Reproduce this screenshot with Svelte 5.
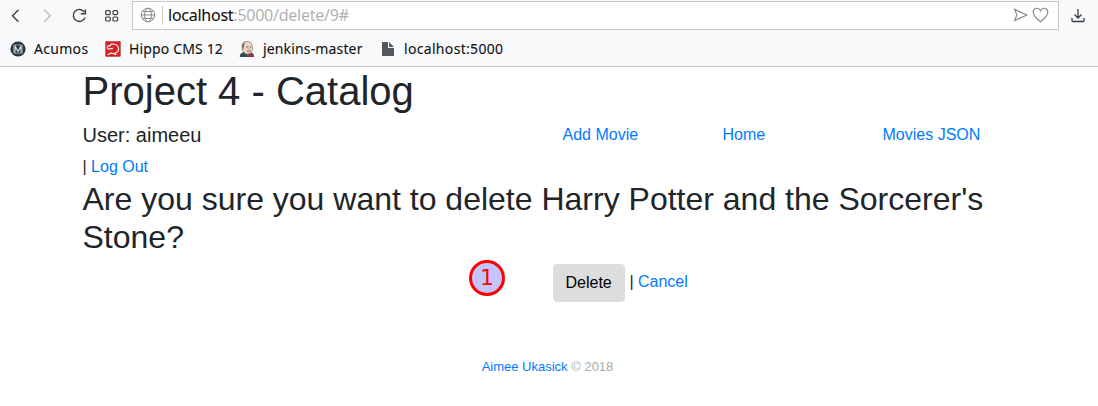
<script>
  const bookmarks = [
    { label: 'Acumos', icon: 'acumos', width: 55 },
    { label: 'Hippo CMS 12', icon: 'hippo', width: 94 },
    { label: 'jenkins-master', icon: 'jenkins', width: 101 },
    { label: 'localhost:5000', icon: 'page', width: 100 }
  ];
  const links = ['Add Movie', 'Home', 'Movies JSON'];
</script>

<div class="window">
  <header class="browser">
    <div class="toolbar">
      <svg class="nav" width="132" height="32" viewBox="0 0 132 32" fill="none" stroke="#3c3f42" stroke-width="1.4">
        <path d="M18.5 9.8 12.5 15.7l6 6" />
        <path d="M44.2 9.8 50.2 15.7l-6 6" stroke="#b8babc" />
        <path d="M84.4 12.2A6 6 0 1 0 85 17.4" />
        <path d="M85.4 9.5v4.2h-4.6" />
        <g stroke-width="1.2">
          <rect x="105.6" y="10.6" width="4.6" height="4" rx="1" />
          <rect x="113" y="10.6" width="4.6" height="4" rx="1" />
          <rect x="105.6" y="17" width="4.6" height="4" rx="1" />
          <rect x="113" y="17" width="4.6" height="4" rx="1" />
        </g>
      </svg>
      <div class="address">
        <svg class="globe" width="16" height="16" viewBox="0 0 16 16" fill="none" stroke="#888b8d" stroke-width="1">
          <circle cx="8" cy="8" r="6.8" />
          <ellipse cx="8" cy="8" rx="3.4" ry="6.8" />
          <path d="M1.2 8h13.6M2.5 4.5h11M2.5 11.5h11" />
        </svg>
        <span class="divider"></span>
        <span class="url"><b>localhost</b><i>:5000/delete/9#</i></span>
        <svg class="actions" width="38" height="18" viewBox="0 0 38 18" fill="none" stroke="#888b8d" stroke-width="1.2">
          <path d="M2.7 3.4 14.8 9 2.7 14.6 4.8 9Z" />
          <path d="M28.5 15.7C26.7 14 21.2 10.5 21.2 6.2C21.2 1.5 26.9 1 28.5 4.7C30.1 1 35.8 1.5 35.8 6.2C35.8 10.5 30.3 14 28.5 15.7Z" />
        </svg>
      </div>
      <svg class="download" width="14" height="16" viewBox="0 0 14 16" fill="none" stroke="#3c3f42" stroke-width="1.3">
        <path d="M7 1v8.8M3.5 6.5 7 10 10.5 6.5M1 10v2.5q0 1 1 1h10q1 0 1-1V10" />
      </svg>
    </div>
    <nav class="bookmarks">
      {#each bookmarks as item}
        <div class="bookmark {item.icon}">
          <svg width="16" height="16" viewBox="0 0 16 16">
            {#if item.icon === 'acumos'}
              <circle cx="8" cy="8" r="7.6" fill="#26343b" />
              <path d="M3.8 4h8.4v8.2H3.8Z" fill="none" stroke="#9aa4a9" />
              <path d="M4.8 4.5 8 10.5l3.2-6M5 6v5.5M11 6v5.5" fill="none" stroke="#e3e6e7" stroke-width="1.1" />
            {:else if item.icon === 'hippo'}
              <rect x=".3" y=".3" width="15.4" height="15.4" rx="1" fill="#cf2529" />
              <path d="M1.8 6.8 3.4 4.6 5.2 4.8 6.2 3.2Q10.6 2.4 12.6 5Q14.6 8.2 12.6 10.6Q11 12.2 8.6 12.6M2 7.6 5.4 7.8 8 7.4M2.6 13.8 6 12.2 8.8 12.6 11.4 13.8" fill="none" stroke="#ffe9e7" stroke-width="1.2" />
            {:else if item.icon === 'jenkins'}
              <path d="M.8 16Q.5 12.5 4.4 11l7.5.5q3.2.8 3.1 4.5Z" fill="#34485a" />
              <path d="M3.2 6Q2.5 1.2 7 .5Q12.3-.2 13.4 4.6Q14.5 9.2 11.6 12.2Q8 14.6 5.2 11.7Q2.5 9.4 3.2 6Z" fill="#e9d1bd" stroke="#8a7a70" stroke-width=".7" />
              <path d="M3 7.5Q2.4 2 5.5 1L5 5.3 4.3 8.2Z" fill="#79716b" />
              <path d="M7.4 6h1.7m1.4 0H12M8 10q2 .9 3.5-.4" stroke="#6b5448" stroke-width=".9" fill="none" />
              <path d="m9 7.1.8 1.3" stroke="#c69a80" />
              <path d="m8 13 2.2 1.1L13.5 13v3l-3.3-1.2L8 16Z" fill="#cf2931" />
            {:else}
              <path d="M2 1h6v6h6v8H2Z" fill="#55585a" />
              <path d="m9 1 5 5H9Z" fill="#55585a" />
            {/if}
          </svg>
          <span class="label" style:width="{item.width}px">{item.label}</span>
        </div>
      {/each}
    </nav>
  </header>

  <main>
    <h1>Project 4 - Catalog</h1>
    <div class="userrow">
      <h5>User: aimeeu</h5>
      {#each links as link}<a href="#top">{link}</a>{/each}
    </div>
    <div class="logout">| <a href="#top">Log Out</a></div>
    <h2>Are you sure you want to delete Harry Potter and the Sorcerer's Stone?</h2>
    <div class="confirm">
      <span class="marker">1</span>
      <div class="choices"><button>Delete</button><span class="cancel">| <a href="#top">Cancel</a></span></div>
    </div>
    <footer><a href="#top">Aimee Ukasick</a> © 2018</footer>
  </main>
</div>

<style>
  :global(body) { margin: 0; background: #fff; }
  .window { width: 1098px; height: 406px; overflow: hidden; box-sizing: border-box; }
  .window :global(*) { box-sizing: border-box; }
  svg { display: block; flex: none; }
  .browser { height: 67px; background: #f7f9fb; border-bottom: 1px solid #c5c8ca; font-family: "Noto Sans", sans-serif; }
  .toolbar { height: 32px; display: flex; align-items: flex-start; }
  .address { width: 927px; height: 29px; margin-top: 1px; border: 1px solid #c3c8c8; background: #fff; display: flex; align-items: center; padding-left: 7px; }
  .globe { margin-top: -1px; }
  .divider { width: 1px; height: 19px; background: #c9cccd; margin-left: 6px; }
  .url { margin: -2px 0 0 5px; font-size: 16px; line-height: 26px; letter-spacing: -.25px; white-space: nowrap; }
  .url b { font-weight: 400; color: #111; -webkit-text-stroke: .1px #111; }
  .url i { font-style: normal; color: #b0b2b3; }
  .actions { margin: -2px 8px 0 auto; }
  .download { margin: 8px 0 0 11.5px; }
  .bookmarks { height: 34px; display: flex; align-items: center; padding-left: 10px; gap: 16px; }
  .bookmark { display: flex; align-items: center; gap: 8px; }
  .label { font-size: 14px; line-height: 22px; color: #111; white-space: nowrap; -webkit-text-stroke: .1px #111; letter-spacing: .15px; }
  .acumos .label { letter-spacing: .3px; }
  .page .label { letter-spacing: .32px; }
  main { width: 960px; margin-left: 67.5px; padding: 0 15px; color: #212529; font: 16px/24px "Liberation Sans", Arial, sans-serif; }
  h1, h2, h5 { margin: 0 0 8px; font-weight: 400; line-height: 1.2; }
  h1 { font-size: 40px; }
  h2 { font-size: 32px; margin: 1px 0 7px; }
  h5 { font-size: 20px; margin: 0; }
  a { color: #007bff; text-decoration: none; }
  .userrow { height: 32px; display: grid; grid-template-columns: 480px 160px 160px 130px; align-items: start; }
  .logout { height: 24px; }
  .confirm { display: flex; height: 38px; align-items: flex-start; padding-left: 386.5px; }
  .marker { width: 36px; height: 36px; flex: none; margin-top: -4px; border: 3px solid #f00; border-radius: 50%; background: #c4c4ff; color: #f00; font: 22px/30px "DejaVu Sans", sans-serif; text-align: center; }
  .choices { display: flex; margin-left: 48px; white-space: nowrap; }
  .cancel { margin: 6px 0 0 4.4px; }
  button { width: 72px; height: 38px; padding: 6px 11.5px; border: 1px solid #ddd; border-radius: 4px; background: #ddd; color: #000; font: 16px/24px "Liberation Sans", Arial, sans-serif; text-align: left; }
  footer { margin-top: 53px; text-align: center; font-size: 13px; color: #aaa; }
</style>
